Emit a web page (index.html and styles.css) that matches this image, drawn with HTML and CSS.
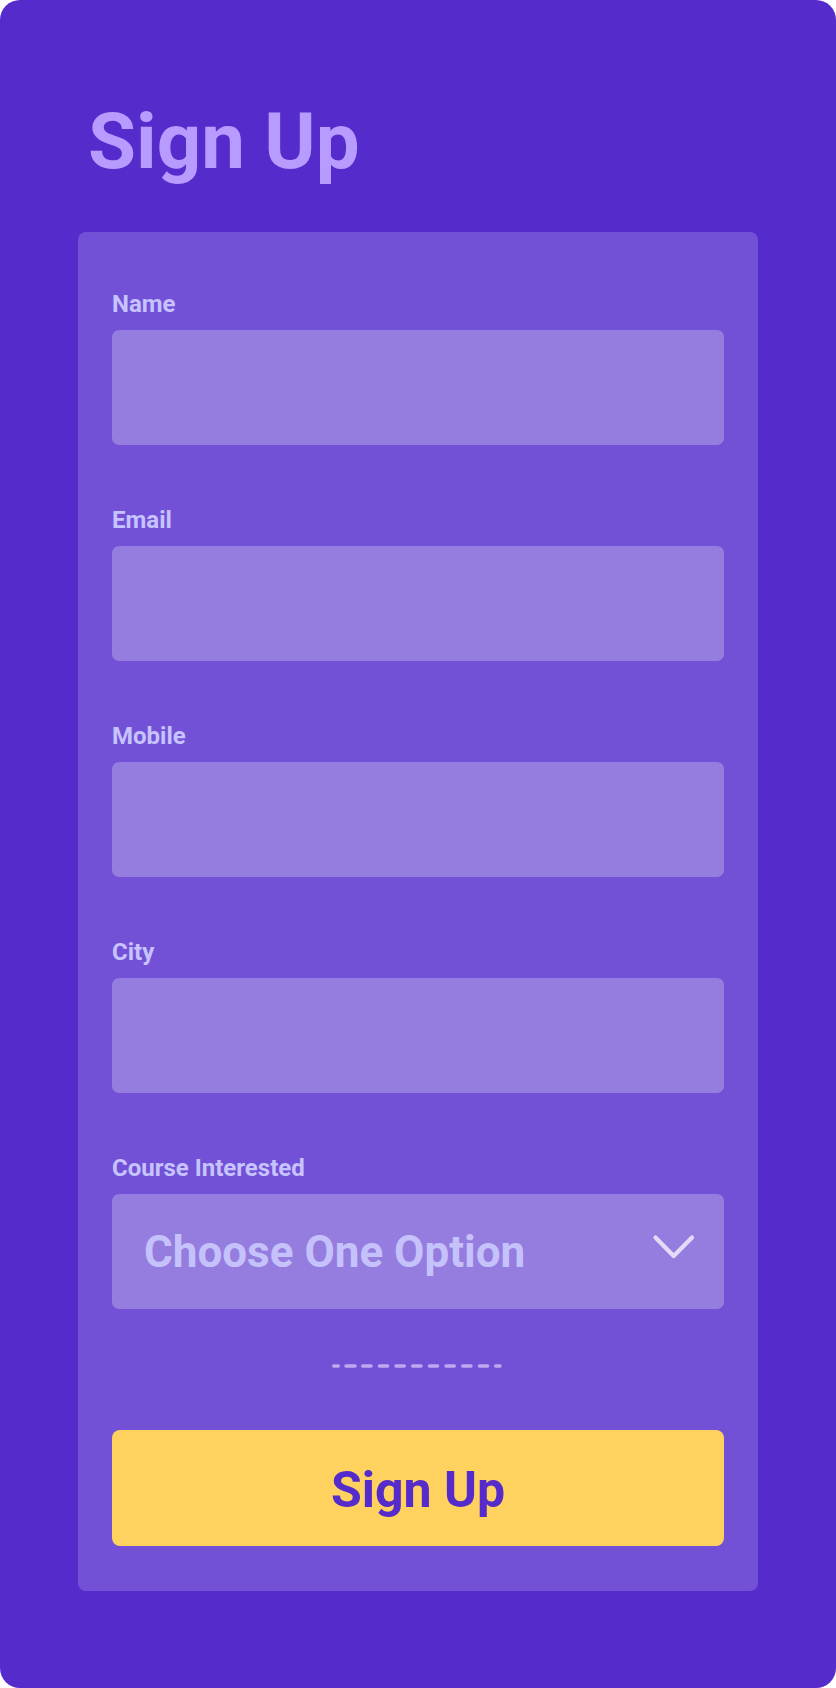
FILE: index.html
```html
<!DOCTYPE html>
<html lang="en">
<head>
<meta charset="utf-8">
<title>Sign Up</title>
<link rel="stylesheet" href="styles.css">
</head>
<body>
<main class="page">
  <h1 class="title">Sign Up</h1>
  <form class="card">
    <div class="field">
      <label class="label" for="name">Name</label>
      <input class="input" id="name" type="text">
    </div>
    <div class="field">
      <label class="label" for="email">Email</label>
      <input class="input" id="email" type="email">
    </div>
    <div class="field">
      <label class="label" for="mobile">Mobile</label>
      <input class="input" id="mobile" type="tel">
    </div>
    <div class="field">
      <label class="label" for="city">City</label>
      <input class="input" id="city" type="text">
    </div>
    <div class="field">
      <span class="label">Course Interested</span>
      <div class="select">
        <span class="select-text">Choose One Option</span>
        <svg class="chevron" width="44" height="28" viewBox="0 0 44 28" aria-hidden="true">
          <polyline points="3.5,4.5 21.7,23 40,4.5" fill="none" stroke="#E4DBF9" stroke-width="4.2" stroke-linecap="round" stroke-linejoin="round"/>
        </svg>
      </div>
    </div>
    <div class="divider">
      <svg width="170" height="4" viewBox="0 0 170 4" aria-hidden="true">
        <path d="M1.75 2H6.25M14.05 2H22.95M30.75 2H38.95M47.45 2H55.55M64.05 2H72.25M80.75 2H88.95M97.45 2H105.55M114.05 2H122.25M130.75 2H138.95M147.45 2H155.55M163.75 2H167.95" fill="none" stroke="#BCA9EF" stroke-width="3.5" stroke-linecap="round"/>
      </svg>
    </div>
    <button class="button" type="button">Sign Up</button>
  </form>
</main>
</body>
</html>
```
FILE: styles.css
```css
* {
  box-sizing: border-box;
}

html, body {
  margin: 0;
  padding: 0;
  background: #ffffff;
}

body {
  font-family: Roboto, "Liberation Sans", Arial, sans-serif;
}

.page {
  width: 836px;
  height: 1688px;
  background: #552BCB;
  border-radius: 20px;
  padding: 95px 78px 0 78px;
  display: flex;
  flex-direction: column;
}

.title {
  margin: 0 0 44px 10px;
  font-size: 78px;
  line-height: 93px;
  font-weight: 700;
  color: #B89BFF;
}

.card {
  background: #7351D7;
  border-radius: 8px;
  padding: 58px 34px 45px 34px;
  display: flex;
  flex-direction: column;
  gap: 61px;
  margin: 0;
}

.field {
  display: flex;
  flex-direction: column;
  gap: 12px;
}

.label {
  font-size: 24px;
  line-height: 28px;
  font-weight: 700;
  color: #C6C3FF;
}

.input {
  display: block;
  width: 100%;
  height: 115px;
  border: none;
  border-radius: 7px;
  background: #957DDF;
  padding: 0 30px;
  font: inherit;
  outline: none;
}

.select {
  height: 115px;
  border-radius: 7px;
  background: #957DDF;
  padding: 0 28px 0 32px;
  display: flex;
  align-items: center;
  justify-content: space-between;
}

.select-text {
  font-size: 44px;
  font-weight: 700;
  color: #C5C2FB;
}

.chevron {
  display: block;
  margin-top: -10px;
}

.divider {
  display: flex;
  justify-content: center;
  margin: -6px 0 0 -3px;
  height: 4px;
}

.divider svg {
  display: block;
}

.button {
  display: block;
  width: 100%;
  height: 116px;
  margin-top: 1px;
  padding: 3px 0 0 0;
  border: none;
  border-radius: 8px;
  background: #FFD15E;
  color: #552BCB;
  font-family: Roboto, "Liberation Sans", Arial, sans-serif;
  font-size: 50px;
  font-weight: 700;
  cursor: pointer;
}
```
